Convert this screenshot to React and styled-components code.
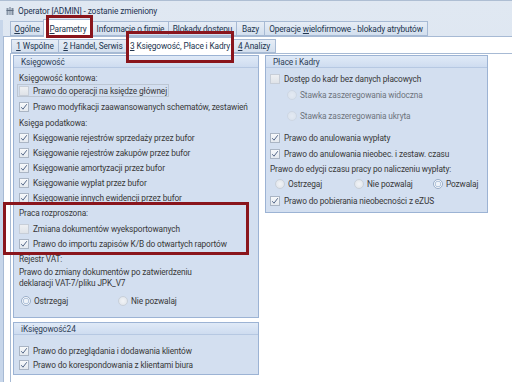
import React from 'react';
import styled, { createGlobalStyle } from 'styled-components';

const Global = createGlobalStyle`
  html, body { margin: 0; padding: 0; background: #fff; }
  #root { width: 512px; height: 382px; }
`;

const FONT = `Roboto, "Liberation Sans", Arial, sans-serif`;

const Win = styled.div`
  position: relative;
  width: 512px;
  height: 382px;
  display: flex;
  flex-direction: column;
  background: linear-gradient(#e0e8f2, #d5e0ee);
  font-family: ${FONT};
  font-size: 8.3px;
  letter-spacing: -0.12px;
  color: #383838;
  overflow: hidden;
`;

const TitleBar = styled.div`
  height: 20px;
  box-sizing: border-box;
  border-top: 1px solid #aebed3;
  display: flex;
  align-items: center;
  gap: 4px;
  padding-left: 6px;
  color: #1f3553;
  font-size: 8.4px;
`;

const TabRow = styled.div`
  display: flex;
  align-items: flex-end;
  height: ${p => p.$h}px;
  padding-left: ${p => p.$pl}px;
  flex-shrink: 0;
`;

const Tab = styled.div`
  box-sizing: border-box;
  width: ${p => p.$w}px;
  height: ${p => (p.$active ? p.$h + 3 : p.$h)}px;
  margin-bottom: ${p => (p.$active ? -1 : 0)}px;
  display: flex;
  align-items: center;
  justify-content: center;
  border: 1px solid #a7bad4;
  border-bottom: ${p => (p.$active ? 'none' : '1px solid #a7bad4')};
  margin-left: -1px;
  background: ${p => (p.$active ? '#ffffff' : 'linear-gradient(#e6edf6, #d3dfee)')};
  color: #22354f;
  white-space: nowrap;
  position: relative;
  z-index: ${p => (p.$active ? 2 : 1)};
`;

const U = styled.span`
  text-decoration: underline;
  text-underline-offset: 1px;
`;

const Page = styled.div`
  flex: 1;
  display: flex;
  flex-direction: column;
  background: #ffffff;
  border-top: 1px solid #a7bad4;
  border-left: 1px solid #a7bad4;
  margin-left: ${p => p.$ml}px;
  min-height: 0;
`;

const Frame = styled.div`
  flex: 1;
  display: flex;
  flex-direction: column;
  border-left: 3px solid #c7d6ea;
  min-height: 0;
`;

const Content = styled.div`
  flex: 1;
  display: grid;
  grid-template-columns: 246px 223px;
  column-gap: 6px;
  align-items: start;
  padding: 1px 0 0 2px;
`;

const Column = styled.div`
  display: flex;
  flex-direction: column;
  gap: 4px;
`;

const Panel = styled.div`
  box-sizing: border-box;
  border: 1px solid #9cb3d4;
  background: #d3dff0;
  display: flex;
  flex-direction: column;
  padding-bottom: ${p => p.$pb}px;
`;

const PanelHead = styled.div`
  height: 11px;
  display: flex;
  align-items: center;
  padding-left: 7px;
  background: linear-gradient(#e0eaf7, #cedcf0);
  border-bottom: 1px solid #b6c8e2;
  color: #2e3e55;
`;

const Body = styled.div`
  display: flex;
  flex-direction: column;
  padding: ${p => p.$pt}px 0 0 ${p => p.$pl}px;
`;

const Row = styled.div`
  height: ${p => p.$h}px;
  margin-top: ${p => p.$mt || 0}px;
  display: flex;
  align-items: center;
  gap: ${p => p.$gap || 4}px;
  padding-left: ${p => p.$indent || 0}px;
  white-space: nowrap;
`;

const Focus = styled.div`
  align-self: flex-start;
  height: ${p => p.$h}px;
  margin-top: ${p => p.$mt || 0}px;
  margin-left: -2px;
  box-sizing: border-box;
  border: 1px solid #bcc6d3;
  display: flex;
  align-items: center;
  gap: 4px;
  padding: 0 1px 0 1px;
  white-space: nowrap;
`;

const Text = styled.div`
  line-height: 11px;
  padding-top: 1px;
  margin-top: ${p => p.$mt || 0}px;
`;

const Box = styled.span`
  width: 10px;
  height: 10px;
  box-sizing: border-box;
  flex-shrink: 0;
  border: 1px solid ${p => (p.$checked ? '#aab5c4' : '#c7ced8')};
  background: ${p => (p.$checked ? 'linear-gradient(#f7f9fb, #e4e9ef)' : 'linear-gradient(#eef0f3, #dfe3e8)')};
  display: flex;
  align-items: center;
  justify-content: center;
`;

const RadioDot = styled.span`
  width: 10px;
  height: 10px;
  box-sizing: border-box;
  border-radius: 50%;
  flex-shrink: 0;
  border: 1px solid ${p => (p.$on ? '#9aaec8' : '#c9d0d9')};
  background: ${p => (p.$on ? 'radial-gradient(circle, #eef3f9 0 2px, #b7c8de 2.5px 3px, #f3f6fa 3.5px)' : 'radial-gradient(circle, #f2f4f7, #dde2e8)')};
  opacity: ${p => (p.$dim ? 0.55 : 1)};
`;

const Dim = styled.span`
  color: ${p => (p.$dim ? '#6d737c' : 'inherit')};
`;

const RadioGroup = styled.div`
  height: ${p => p.$h}px;
  margin-top: ${p => p.$mt || 0}px;
  display: grid;
  grid-template-columns: ${p => p.$cols};
  align-items: center;
  padding-left: ${p => p.$indent || 0}px;
`;

const Opt = styled.div`
  display: flex;
  align-items: center;
  gap: 3px;
  white-space: nowrap;
`;

const Mark = styled.div`
  position: absolute;
  box-sizing: border-box;
  border: 3px solid #8a151c;
  left: ${p => p.$x}px;
  top: ${p => p.$y}px;
  width: ${p => p.$w}px;
  height: ${p => p.$hh}px;
  z-index: 10;
  pointer-events: none;
`;

const Check = ({ on }) => (
  <Box $checked={on}>
    {on && (
      <svg width="8" height="8" viewBox="0 0 8 8">
        <path d="M1.2 4.2 L3 6.2 L6.8 1.2" fill="none" stroke="#56698a" strokeWidth="1" />
      </svg>
    )}
  </Box>
);

const CB = ({ on, h = 15, mt, children }) => (
  <Row $h={h} $mt={mt}>
    <Check on={on} />
    <span>{children}</span>
  </Row>
);

const Radio = ({ on, dim, children }) => (
  <Opt>
    <RadioDot $on={on} $dim={dim} />
    <Dim $dim={dim}>{children}</Dim>
  </Opt>
);

const AppIcon = () => (
  <svg width="8" height="10" viewBox="0 0 8 10">
    <rect x="0.5" y="2" width="2" height="7" fill="#8a97a8" />
    <rect x="3" y="1" width="2" height="8" fill="#a3afbe" />
    <rect x="5.5" y="2" width="2" height="7" fill="#7d8a9c" />
    <rect x="0.5" y="4" width="7" height="1" fill="#5f6d80" />
  </svg>
);

export default function App() {
  return (
    <>
      <Global />
      <Win>
        <TitleBar>
          <AppIcon />
          <span>Operator [ADMIN] - zostanie zmieniony</span>
        </TitleBar>
        <Frame>
          <TabRow $h={16} $pl={8}>
            <Tab $h={15} $w={34}><span><U>O</U>gólne</span></Tab>
            <Tab $h={15} $w={50} $active><span><U>P</U>arametry</span></Tab>
            <Tab $h={15} $w={77}><span>Informacje o firmie</span></Tab>
            <Tab $h={15} $w={69}><span>Blokady dostępu</span></Tab>
            <Tab $h={15} $w={29}><span>Bazy</span></Tab>
            <Tab $h={15} $w={164}><span>Operacje <U>w</U>ielofirmowe - blokady atrybutów</span></Tab>
          </TabRow>
          <Page $ml={0}>
            <TabRow $h={16} $pl={8}>
              <Tab $h={14} $w={48}><span><U>1</U>&nbsp;Wspólne</span></Tab>
              <Tab $h={14} $w={70}><span><U>2</U>&nbsp;Handel, Serwis</span></Tab>
              <Tab $h={14} $w={106} $active><span><U>3</U>&nbsp;Księgowość, Płace i Kadry</span></Tab>
              <Tab $h={14} $w={44}><span><U>4</U>&nbsp;Analizy</span></Tab>
            </TabRow>
            <Page $ml={6}>
              <Content>
                <Column>
                  <Panel $pb={8}>
                    <PanelHead>Księgowość</PanelHead>
                    <Body $pt={3} $pl={5}>
                      <Row $h={13}>Księgowość kontowa:</Row>
                      <Focus $h={13} $mt={0}>
                        <Check on={false} />
                        <span>Prawo do operacji na księdze głównej</span>
                      </Focus>
                      <CB on h={14} mt={3}>Prawo modyfikacji zaawansowanych schematów, zestawień</CB>
                      <Row $h={14} $mt={2}>Księga podatkowa:</Row>
                      <CB on>Księgowanie rejestrów sprzedaży przez bufor</CB>
                      <CB on>Księgowanie rejestrów zakupów przez bufor</CB>
                      <CB on>Księgowanie amortyzacji przez bufor</CB>
                      <CB on>Księgowanie wypłat przez bufor</CB>
                      <CB on>Księgowanie innych ewidencji przez bufor</CB>
                      <Row $h={16}>Praca rozproszona:</Row>
                      <CB on={false}>Zmiana dokumentów wyeksportowanych</CB>
                      <CB on>Prawo do importu zapisów K/B do otwartych raportów</CB>
                      <Row $h={15}>Rejestr VAT:</Row>
                      <Text>
                        Prawo do zmiany dokumentów po zatwierdzeniu
                        <br />
                        deklaracji VAT-7/pliku JPK_V7
                      </Text>
                      <RadioGroup $h={16} $mt={4} $cols="97px 1fr" $indent={2}>
                        <Radio on>Ostrzegaj</Radio>
                        <Radio>Nie pozwalaj</Radio>
                      </RadioGroup>
                    </Body>
                  </Panel>
                  <Panel $pb={2}>
                    <PanelHead>iKsięgowość24</PanelHead>
                    <Body $pt={9} $pl={5}>
                      <CB on h={14}>Prawo do przeglądania i dodawania klientów</CB>
                      <CB on h={14}>Prawo do korespondowania z klientami biura</CB>
                    </Body>
                  </Panel>
                </Column>
                <Column>
                  <Panel $pb={4}>
                    <PanelHead>Płace i Kadry</PanelHead>
                    <Body $pt={4} $pl={4}>
                      <CB on={false} h={14}>Dostęp do kadr bez danych płacowych</CB>
                      <Row $h={16} $mt={1} $indent={17} $gap={3}>
                        <RadioDot $dim />
                        <Dim $dim>Stawka zaszeregowania widoczna</Dim>
                      </Row>
                      <Row $h={16} $mt={5} $indent={17} $gap={3}>
                        <RadioDot $dim />
                        <Dim $dim>Stawka zaszeregowania ukryta</Dim>
                      </Row>
                      <CB on h={14} mt={7}>Prawo do anulowania wypłaty</CB>
                      <CB on h={16} mt={1}>Prawo do anulowania nieobec. i zestaw. czasu</CB>
                      <Row $h={14}>Prawo do edycji czasu pracy po naliczeniu wypłaty:</Row>
                      <RadioGroup $h={16} $cols="79px 79px 1fr" $indent={5}>
                        <Radio>Ostrzegaj</Radio>
                        <Radio>Nie pozwalaj</Radio>
                        <Radio on>Pozwalaj</Radio>
                      </RadioGroup>
                      <CB on h={14} mt={2}>Prawo do pobierania nieobecności z eZUS</CB>
                    </Body>
                  </Panel>
                </Column>
              </Content>
            </Page>
          </Page>
        </Frame>
        <Mark $x={46} $y={15} $w={47} $hh={23} />
        <Mark $x={126} $y={31} $w={108} $hh={32} />
        <Mark $x={3} $y={202} $w={246} $hh={53} />
      </Win>
    </>
  );
}
